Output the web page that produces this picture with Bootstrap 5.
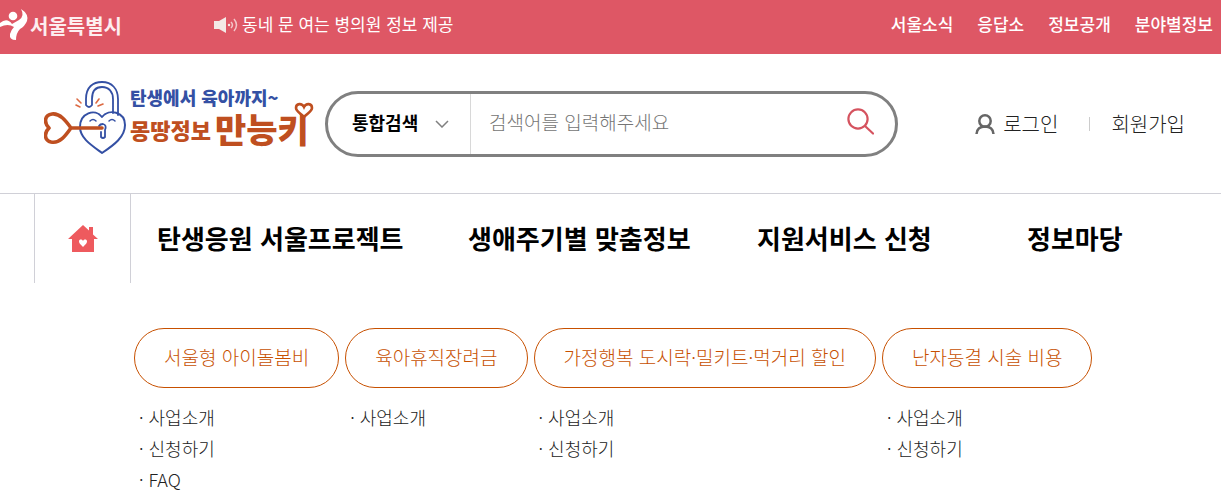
<!DOCTYPE html>
<html lang="ko">
<head>
<meta charset="utf-8">
<meta name="viewport" content="width=device-width, initial-scale=1">
<title>몽땅정보 만능키</title>
<link href="https://cdn.jsdelivr.net/npm/bootstrap@5.3.0/dist/css/bootstrap.min.css" rel="stylesheet">
<style>
  body { font-family: "Noto Sans CJK KR", sans-serif; color: #222; background: #fff; overflow-x: hidden; }
  a { text-decoration: none; color: inherit; }
  svg { display: block; flex: none; }
  .topbar { background: #de5765; color: #fff; min-height: 54px; font-size: 17px; line-height: 24px; padding: 0 8px 6px 0; }
  .city-name { font-size: 20px; font-weight: 700; color: #fdeef0; padding-top: 4px; }
  .news { margin-left: 92px; gap: 4px; }
  .top-links { gap: 24px; font-weight: 500; }
  .site-header { min-height: 139px; padding: 0 36px 0 44px; }
  .brand { width: 281px; gap: 3px; padding-bottom: 12px; }
  .brand-sub { color: #3450a4; font-size: 18px; line-height: 22px; font-weight: 900; }
  .brand-main { color: #bf4f20; font-weight: 900; gap: 4px; line-height: 42px; }
  .brand-mid { font-size: 22px; }
  .brand-big { font-size: 34px; }
  .brand-heart { position: absolute; right: -5px; top: -6px; }
  .search { height: 66px; border: 3px solid #808080; border-radius: 33px; margin-right: 77px; }
  .search-type { appearance: none; background: none; border: 0; width: 96px; padding: 0 0 2px; font-size: 18px; font-weight: 700; color: #000; }
  .type-box { width: 143px; border-right: 1px solid #d8d8d8; padding-left: 24px; }
  .type-box svg { position: absolute; left: 107px; pointer-events: none; }
  .search-field { border: 0; outline: 0; background: none; padding: 0 18px 2px; font-size: 19px; font-weight: 300; min-width: 0; }
  .search-field::placeholder { color: #757575; opacity: 1; }
  .search-btn { border: 0; background: none; padding: 0 0 4px; margin-right: 21px; }
  .member { font-size: 20px; font-weight: 300; line-height: 30px; }
  .member-join { margin-left: 31px; }
  .member-join::before { content: ""; width: 1px; height: 14px; background: #ccc; margin-right: 21px; }
  .main-nav { border-top: 1px solid #d0d0d7; padding-left: 34px; }
  .home-link { width: 97px; height: 89px; border: solid #d0d0d7; border-width: 0 1px; flex: none; }
  .menu-grid { display: grid; grid-template-columns: 311fr 289fr 270fr 194fr; padding: 0 0 2px 26px; font-size: 26px; font-weight: 700; line-height: 38px; color: #000; }
  .submenu { padding: 45px 0 0 134px; gap: 6px; }
  .pill { display: block; border: 1px solid #c75000; border-radius: 30px; color: #c75000; padding: 13px 29px 15px; font-size: 19px; line-height: 30px; font-weight: 300; white-space: nowrap; }
  .sub-list { margin: 14px 0 0; padding: 0 0 0 5px; list-style: none; font-size: 18px; line-height: 31px; font-weight: 300; }
  .sub-list li::before { content: "·"; margin-right: 5px; }
</style>
</head>
<body>
<div class="topbar d-flex align-items-center">
  <a href="#" class="d-flex align-items-center" aria-label="서울특별시">
    <svg width="30" height="34" viewBox="0 0 30 34" fill="#fff"><circle cx="13" cy="9" r="4.300"/><path d="M0 16Q7 10 12 17L19 13Q25 9 21 2Q29 7 27 14Q25 19 20 22Q16 26 16 33Q9 33 10 27Q11 23 14 20Q8 16 0 20Z"/></svg>
    <span class="city-name">서울특별시</span>
  </a>
  <a href="#" class="news d-flex align-items-center">
    <svg width="24" height="18" viewBox="0 0 24 18" fill="#f3e9e6"><path d="M0 6h5l7-4v16l-7-4H0z"/><circle cx="15" cy="10" r="1.200"/><path d="M17 7q3 3 0 6M20 4q5 6 0 12" fill="none" stroke="#f3c5c8" stroke-width="1.500"/></svg>
    동네 문 여는 병의원 정보 제공
  </a>
  <nav class="top-links d-flex ms-auto">
    <a href="#">서울소식</a><a href="#">응답소</a><a href="#">정보공개</a><a href="#">분야별정보</a>
  </nav>
</div>

<header class="site-header d-flex align-items-center">
  <a href="#" class="brand d-flex align-items-center flex-shrink-0">
    <svg width="83" height="76" viewBox="0 0 83 76" fill="none" stroke-linecap="round" stroke-linejoin="round">
      <path d="M42 25V19C42 7 49 2 58 2C68 2 74 9 74 19V35M69 33V19C69 12 65 7 58 7C51 7 48 12 48 19V25Q45 29 42 25" stroke="#3450a4" stroke-width="1.800"/>
      <path d="M58 37C51 28 36 33 36 47C36 58 47 65 58 73C70 65 81 57 81 45C81 32 65 28 58 37Z" stroke="#3450a4" stroke-width="2"/>
      <path d="M46 41Q49 38 52 41M65 41Q68 38 71 41" stroke="#3450a4" stroke-width="1.500"/>
      <path d="M57 52V57Q59 59 61 57V50Q63 45 59 44Q56 44 55 46" stroke="#3450a4" stroke-width="1.800"/>
      <path d="M58 48H27C22 41 16 33 8 34C0 35 0 43 5 48C0 53 0 60 7 62C16 64 22 55 27 48" stroke="#bf4f20" stroke-width="3.600"/>
      <path d="M32 25L36 27M33 19L37 23M52 23L55 19M54 26L59 24" stroke="#dc6a43" stroke-width="1.600"/>
    </svg>
    <span class="d-block">
      <span class="brand-sub d-block">탄생에서 육아까지~</span>
      <span class="brand-main d-flex align-items-center position-relative">
        <span class="brand-mid">몽땅정보</span><span class="brand-big">만능키</span>
        <svg class="brand-heart" width="20" height="18" viewBox="0 0 20 18"><path d="M10 15C6 11 2 9 2 6C2 1 8 1 10 5C12 1 18 1 18 6C18 9 14 11 10 15Z" fill="#fff" stroke="#bf4f20" stroke-width="2.600"/></svg>
      </span>
    </span>
  </a>
  <form class="search d-flex align-items-center flex-grow-1">
    <div class="type-box position-relative d-flex align-items-center h-100 flex-shrink-0">
      <select class="search-type" aria-label="검색 구분"><option>통합검색</option></select>
      <svg width="14" height="8" viewBox="0 0 14 8" fill="none" stroke="#808080" stroke-width="1.500"><path d="M1 1l6 6 6-6"/></svg>
    </div>
    <input class="search-field flex-grow-1" type="text" placeholder="검색어를 입력해주세요" aria-label="검색어">
    <button class="search-btn" type="button" aria-label="검색">
      <svg width="27" height="27" viewBox="0 0 27 27" fill="none" stroke="#d5535f" stroke-width="2.200" stroke-linecap="round"><circle cx="11" cy="11" r="9.600"/><path d="M18 18l8 7.500"/></svg>
    </button>
  </form>
  <nav class="member d-flex align-items-center flex-shrink-0">
    <a href="#" class="d-flex align-items-center gap-2">
      <svg width="20" height="20" viewBox="0 0 20 20" fill="none" stroke="#666" stroke-width="2.500"><circle cx="10" cy="7" r="5.700"/><path d="M1.500 20C2 14 6 12.500 10 12.500S18 14 18.500 20"/></svg>로그인</a>
    <a href="#" class="member-join d-flex align-items-center">회원가입</a>
  </nav>
</header>

<nav class="main-nav d-flex">
  <a href="#" class="home-link d-flex align-items-center justify-content-center" aria-label="홈">
    <svg width="30" height="27" viewBox="0 0 30 27"><path d="M15 0L21 5.500V2h4v7.500L30 14H26V27H4V14H0Z" fill="#ee5a5e"/><path d="M15 22C12 19 11 18 11 16.500C11 14 14 14 15 16C16 14 19 14 19 16.500C19 18 18 19 15 22Z" fill="#fff"/></svg>
  </a>
  <div class="menu-grid flex-grow-1 align-items-center">
    <a href="#">탄생응원 서울프로젝트</a><a href="#">생애주기별 맞춤정보</a><a href="#">지원서비스 신청</a><a href="#">정보마당</a>
  </div>
</nav>

<div class="submenu d-flex align-items-start">
  <div>
    <a href="#" class="pill">서울형 아이돌봄비</a>
    <ul class="sub-list"><li><a href="#">사업소개</a></li><li><a href="#">신청하기</a></li><li><a href="#">FAQ</a></li></ul>
  </div>
  <div>
    <a href="#" class="pill">육아휴직장려금</a>
    <ul class="sub-list"><li><a href="#">사업소개</a></li></ul>
  </div>
  <div>
    <a href="#" class="pill">가정행복 도시락·밀키트·먹거리 할인</a>
    <ul class="sub-list"><li><a href="#">사업소개</a></li><li><a href="#">신청하기</a></li></ul>
  </div>
  <div>
    <a href="#" class="pill">난자동결 시술 비용</a>
    <ul class="sub-list"><li><a href="#">사업소개</a></li><li><a href="#">신청하기</a></li></ul>
  </div>
</div>
<script src="https://cdn.jsdelivr.net/npm/bootstrap@5.3.0/dist/js/bootstrap.bundle.min.js"></script>
</body>
</html>
